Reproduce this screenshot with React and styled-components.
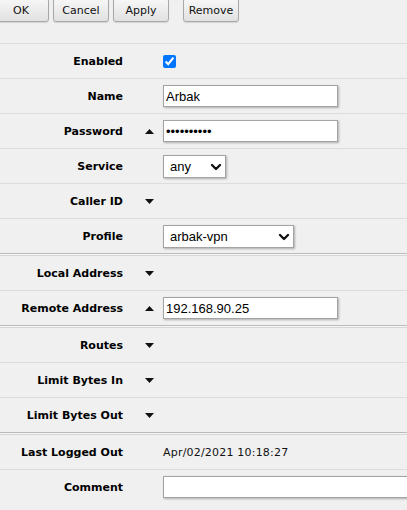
import React from 'react';
import styled, { createGlobalStyle } from 'styled-components';
import { ChevronDown } from 'lucide-react';

const GlobalStyle = createGlobalStyle`
    html, body {
        margin: 0;
        padding: 0;
        background: #f0f0f0;
    }
    body {
        font-family: "DejaVu Sans", Verdana, sans-serif;
        font-size: 11px;
        color: #000;
    }
`;

const Page = styled.div`
    width: 407px;
    height: 510px;
    overflow: hidden;
    background: #f0f0f0;
`;

const Toolbar = styled.div`
    display: flex;
    align-items: flex-start;
    gap: 4px;
    height: 43px;
    margin-left: -7px;
    border-bottom: 1px solid #dcdcdc;
`;

const Button = styled.button`
    box-sizing: border-box;
    width: 56px;
    height: 24px;
    margin-top: -2px;
    margin-left: ${(p) => (p.$spaced ? '10px' : '0')};
    padding: 0;
    font: 11px "DejaVu Sans", Verdana, sans-serif;
    color: #111;
    background: linear-gradient(#f7f7f7, #e1e1e1);
    border: 1px solid #a8a8a8;
    border-radius: 3px;
    box-shadow: 0 1px 1px rgba(0, 0, 0, 0.12);
`;

const Row = styled.div`
    display: grid;
    grid-template-columns: 123px 40px 1fr;
    align-items: center;
    height: 34px;
    border-bottom: 1px solid #dcdcdc;
`;

const Group = styled.div`
    & > ${Row}:last-child {
        border-bottom-color: #bababa;
    }
    & + & {
        border-top: 1px solid #f7f7f7;
    }
    & + & > ${Row}:first-child {
        border-top: 1px solid #d6d6d6;
    }
    &:last-child > ${Row}:last-child {
        border-bottom-color: transparent;
    }
`;

const Label = styled.div`
    text-align: right;
    font-weight: bold;
    white-space: nowrap;
    color: #000;
`;

const ToggleCell = styled.div`
    display: flex;
    align-items: center;
    padding-left: 22px;
`;

const Value = styled.div`
    display: flex;
    align-items: center;
    white-space: nowrap;
    color: #111;
    letter-spacing: 0.2px;
`;

const TextInput = styled.input`
    box-sizing: border-box;
    width: ${(p) => (p.$wide ? '260px' : '175px')};
    height: 22px;
    padding: 0 2px;
    border: 1px solid #a3a3a3;
    background: #fff;
    font: 13px "Liberation Sans", Arial, sans-serif;
    letter-spacing: 0;
    color: #000;
    box-shadow: 1px 1px 2px rgba(0, 0, 0, 0.28);
    outline: none;
`;

const Check = styled.input`
    width: 13px;
    height: 13px;
    margin: 0;
    accent-color: #0075ff;
`;

const SelectBox = styled.div`
    position: relative;
    width: ${(p) => p.$width}px;
    height: 23px;
`;

const Select = styled.select`
    box-sizing: border-box;
    width: 100%;
    height: 100%;
    padding: 0 0 0 6px;
    appearance: none;
    border: 1px solid #a3a3a3;
    border-radius: 0;
    background: #fff;
    font: 13px "Liberation Sans", Arial, sans-serif;
    letter-spacing: 0;
    color: #000;
    box-shadow: 1px 1px 2px rgba(0, 0, 0, 0.28);
    outline: none;
`;

const Chevron = styled(ChevronDown)`
    position: absolute;
    right: 2px;
    top: 4px;
    pointer-events: none;
    color: #111;
`;

function Toggle({ open }) {
    return (
        <svg width="9" height="5" viewBox="0 0 9 5">
            {open ? <polygon points="0,5 9,5 4.5,0" fill="#111" /> : <polygon points="0,0 9,0 4.5,5" fill="#111" />}
        </svg>
    );
}

function Field({ label, toggle, children }) {
    return (
        <Row>
            <Label>{label}</Label>
            <ToggleCell>{toggle && <Toggle open={toggle === 'up'} />}</ToggleCell>
            <Value>{children}</Value>
        </Row>
    );
}

function Dropdown({ width, value }) {
    return (
        <SelectBox $width={width}>
            <Select defaultValue={value}>
                <option value={value}>{value}</option>
            </Select>
            <Chevron size={16} strokeWidth={3.5} />
        </SelectBox>
    );
}

export default function App() {
    return (
        <Page>
            <GlobalStyle />
            <Toolbar>
                <Button>OK</Button>
                <Button>Cancel</Button>
                <Button>Apply</Button>
                <Button $spaced>Remove</Button>
            </Toolbar>

            <Group>
                <Field label="Enabled">
                    <Check type="checkbox" defaultChecked />
                </Field>
                <Field label="Name">
                    <TextInput defaultValue="Arbak" />
                </Field>
                <Field label="Password" toggle="up">
                    <TextInput type="password" defaultValue="arbakvpn12" />
                </Field>
                <Field label="Service">
                    <Dropdown width={63} value="any" />
                </Field>
                <Field label="Caller ID" toggle="down" />
                <Field label="Profile">
                    <Dropdown width={131} value="arbak-vpn" />
                </Field>
            </Group>

            <Group>
                <Field label="Local Address" toggle="down" />
                <Field label="Remote Address" toggle="up">
                    <TextInput defaultValue="192.168.90.25" />
                </Field>
            </Group>

            <Group>
                <Field label="Routes" toggle="down" />
                <Field label="Limit Bytes In" toggle="down" />
                <Field label="Limit Bytes Out" toggle="down" />
            </Group>

            <Group>
                <Field label="Last Logged Out">Apr/02/2021 10:18:27</Field>
                <Field label="Comment">
                    <TextInput $wide defaultValue="" />
                </Field>
            </Group>
        </Page>
    );
}
